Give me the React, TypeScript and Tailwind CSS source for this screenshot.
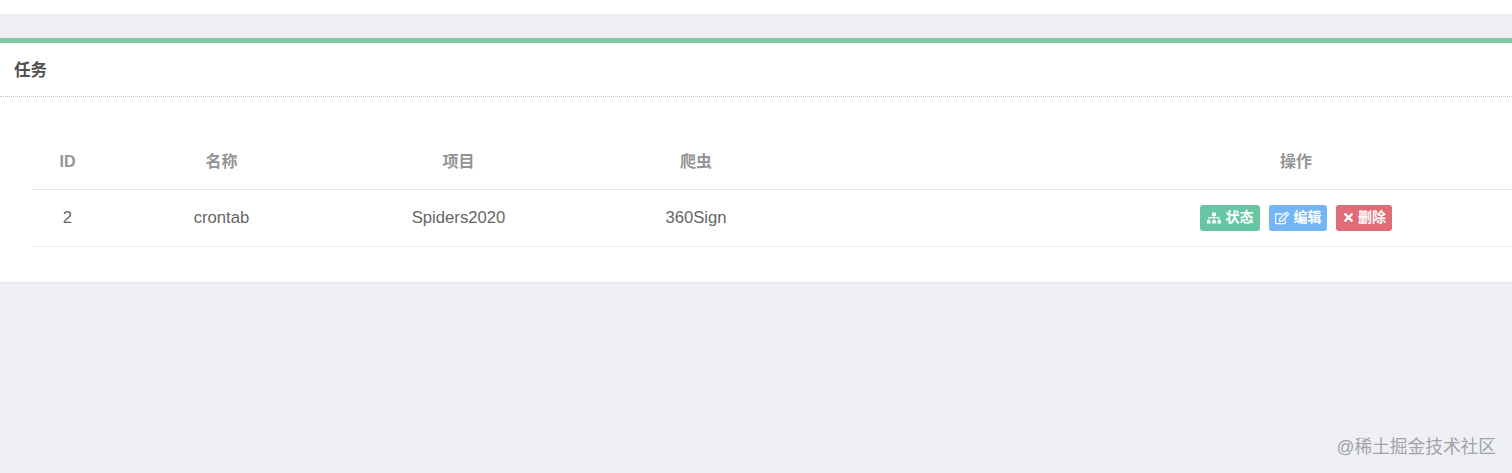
import React from "react";
import { FaRegEdit, FaSitemap, FaTimes } from "react-icons/fa";

const cjk = "font-['Liberation_Sans','Noto_Sans_CJK_SC',sans-serif]";

const headers = ["ID", "名称", "项目", "爬虫", "操作"];

const App = () => {
  return (
    <div className={`relative h-[473px] w-[1512px] overflow-hidden bg-[#eef0f4] ${cjk}`}>
      <div className="h-[14px] bg-white" />
      <div className="mt-6 w-[1512px] overflow-hidden border-t-[5px] border-b border-t-[#80c7a4] border-b-[#e6e7ea] bg-white">
        <div className="flex h-[54px] items-center border-b border-dotted border-[#c4c4c4] pl-[14px] pt-[1px] text-[16.5px] font-semibold text-[#505050]">
          任务
        </div>
        <div className="pl-8 pt-[38px] pb-[35px]">
          <table className="w-[1745px] table-fixed border-collapse text-[16.7px] text-[#666]">
            <colgroup>
              <col className="w-[71px]" />
              <col className="w-[237px]" />
              <col className="w-[237px]" />
              <col className="w-[238px]" />
              <col />
            </colgroup>
            <thead>
              <tr className="h-[54px] border-b border-[#e8e8e8]">
                {headers.map((header) => (
                  <th key={header} className="text-center text-[16px] font-semibold text-[#949494]">
                    {header}
                  </th>
                ))}
              </tr>
            </thead>
            <tbody>
              <tr className="h-[57px] border-b border-[#ececec]">
                <td className="text-center">2</td>
                <td className="text-center">crontab</td>
                <td className="text-center">Spiders2020</td>
                <td className="text-center">360Sign</td>
                <td>
                  <div className="flex justify-center gap-[9px] text-[14px] font-semibold text-white">
                    <span className="flex h-[26px] w-[60px] items-center justify-center gap-[5px] rounded-[3px] bg-[#68c5a3]">
                      <FaSitemap className="text-[14px]" />
                      状态
                    </span>
                    <span className="flex h-[26px] w-[58px] items-center justify-center gap-[5px] rounded-[3px] bg-[#74b6f5]">
                      <FaRegEdit className="text-[14px]" />
                      编辑
                    </span>
                    <span className="flex h-[26px] w-[56px] items-center justify-center gap-[3px] rounded-[3px] bg-[#e06c76]">
                      <FaTimes className="text-[13px]" />
                      删除
                    </span>
                  </div>
                </td>
              </tr>
            </tbody>
          </table>
        </div>
      </div>
      <div className="absolute right-[16px] bottom-[14px] text-[17.7px] leading-[24px] text-[#a2a3a7]">
        @稀土掘金技术社区
      </div>
    </div>
  );
};

export default App;
